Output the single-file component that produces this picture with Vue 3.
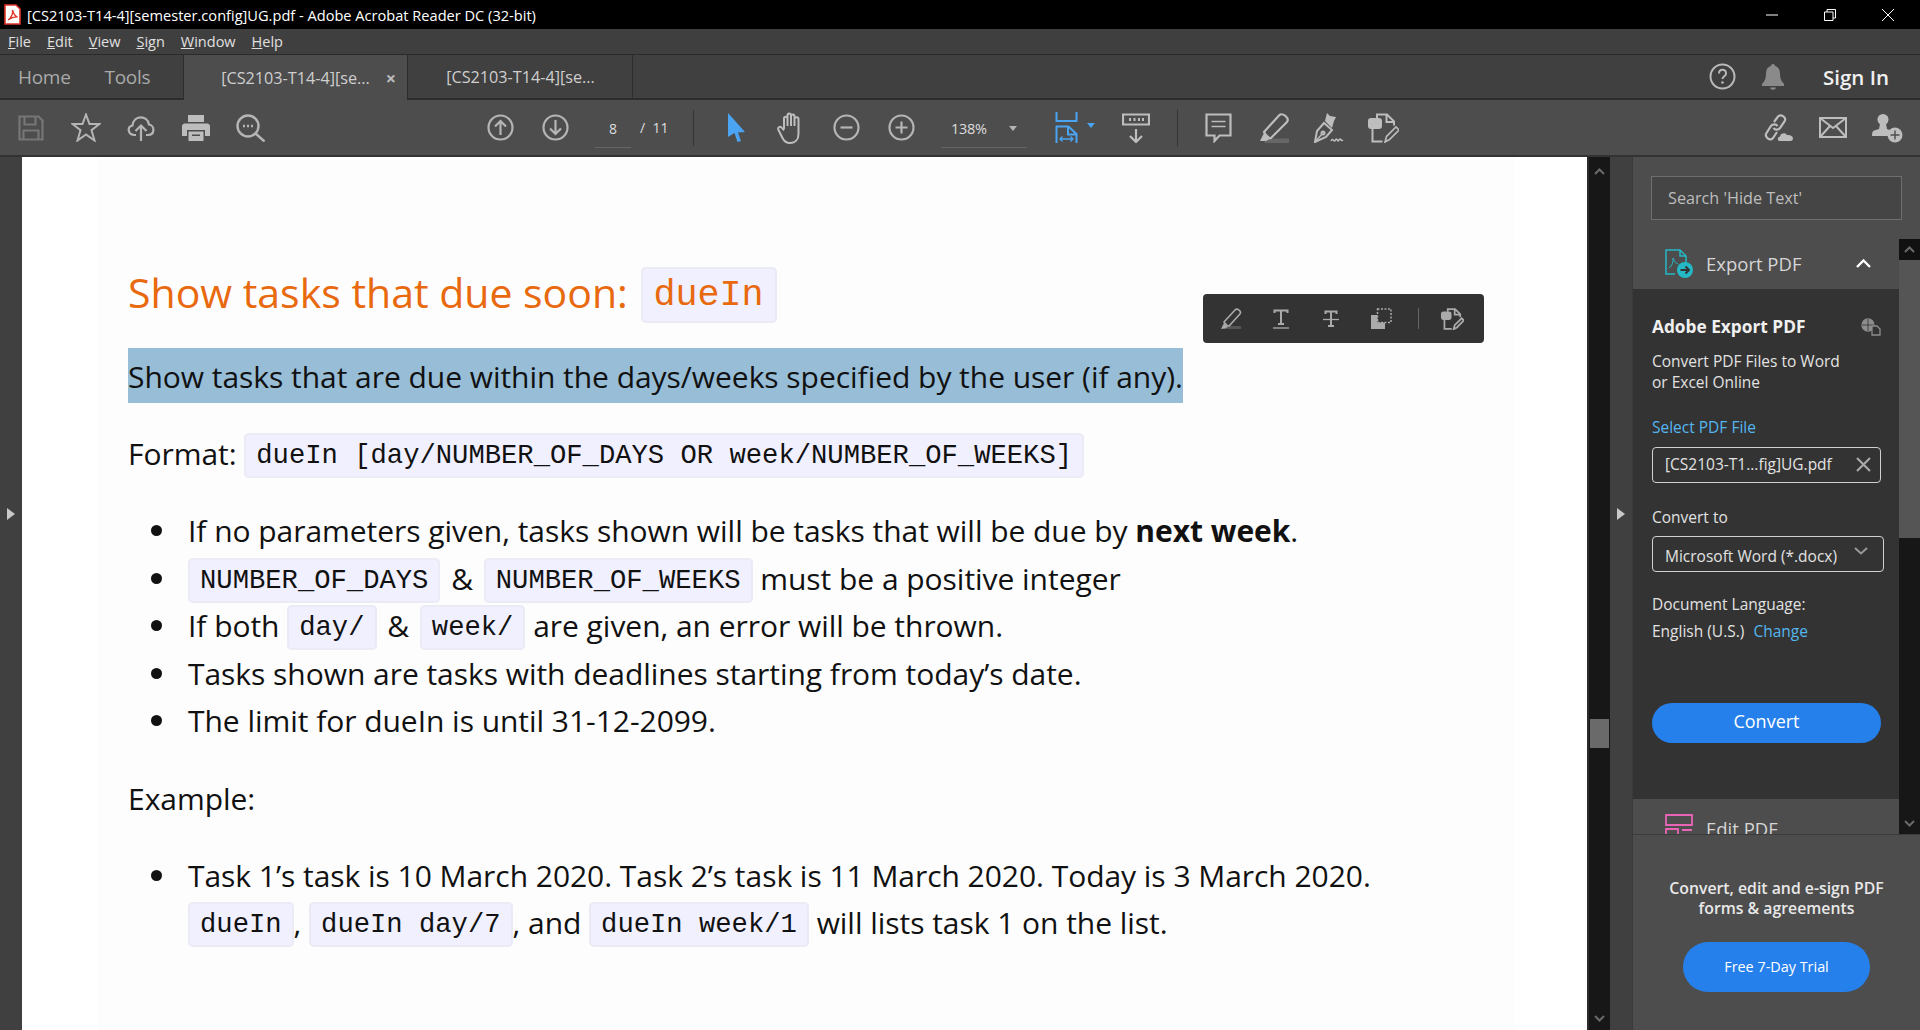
<script setup>
const menus = [
  { first: 'F', rest: 'ile' },
  { first: 'E', rest: 'dit' },
  { first: 'V', rest: 'iew' },
  { first: 'S', rest: 'ign' },
  { first: 'W', rest: 'indow' },
  { first: 'H', rest: 'elp' },
]
</script>

<template>
  <div class="app">
    <!-- title bar -->
    <div class="titlebar">
      <svg class="pdf-logo" width="17" height="21" viewBox="0 0 17 21">
        <path d="M1 1h11l4 4v15H1z" fill="#fff" stroke="#e0352b" stroke-width="1.6" />
        <path d="M4 16c3-2 5-6 4.500-10 1 4 2.500 6 5 7-3-.3-6 .7-9.500 3z" fill="none" stroke="#e0352b" stroke-width="1.300" />
      </svg>
      <span class="title-text">[CS2103-T14-4][semester.config]UG.pdf - Adobe Acrobat Reader DC (32-bit)</span>
      <div class="win-btns">
        <svg width="12" height="12" viewBox="0 0 12 12"><path d="M0 6h12" stroke="#fff" /></svg>
        <svg width="12" height="12" viewBox="0 0 12 12" fill="none" stroke="#fff"><path d="M.5 3h8.500v8.500H.5zM3 3V.5h8.500V9H9" /></svg>
        <svg width="12" height="12" viewBox="0 0 12 12" stroke="#fff"><path d="M0 0l12 12M12 0L0 12" /></svg>
      </div>
    </div>

    <!-- menu -->
    <div class="menubar">
      <span v-for="m in menus" :key="m.first" class="menu-item"><u>{{ m.first }}</u>{{ m.rest }}</span>
    </div>

    <!-- tabs -->
    <div class="tabbar">
      <span class="nav-link home">Home</span>
      <span class="nav-link tools">Tools</span>
      <div class="tab active">
        <span>[CS2103-T14-4][se...</span>
        <span class="tab-x">×</span>
      </div>
      <div class="tab second">
        <span>[CS2103-T14-4][se...</span>
      </div>
      <div class="tab-right">
        <svg width="27" height="27" viewBox="0 0 27 27" fill="none">
          <circle cx="13.500" cy="13.500" r="12" stroke="#b9b9b9" stroke-width="2" />
          <path d="M10 10.500c0-5 7-5 7 0 0 3-3.500 2.500-3.500 5.500" stroke="#b9b9b9" stroke-width="2" />
          <circle cx="13.500" cy="19.500" r="1.300" fill="#b9b9b9" />
        </svg>
        <svg class="bell" width="22" height="26" viewBox="0 0 22 26" fill="#8a8a8a">
          <path d="M11 0c1.300 0 2 .8 2 2 4 1 5 4.500 5 8 0 5 2 8 4 10v2H0v-2c2-2 4-5 4-10 0-3.500 1-7 5-8 0-1.200.7-2 2-2z" />
          <path d="M8 23.500h6c-.5 3-5.500 3-6 0z" />
        </svg>
        <span class="sign-in">Sign In</span>
      </div>
    </div>

    <!-- toolbar -->
    <div class="toolbar">
      <div class="tool first">
        <svg width="26" height="26" viewBox="0 0 26 26" fill="none" stroke="#767676" stroke-width="2.200">
          <path d="M1.500 1.500h19l4 4v19h-23z" />
          <path d="M6.500 1.500v8h11v-8M5.500 24.500v-9h15v9" />
        </svg>
      </div>
      <div class="tool">
        <svg width="30" height="29" viewBox="0 0 30 29" fill="none" stroke="#b5b5b5" stroke-width="2">
          <path d="M15 1.500l3.500 9.500h10l-8 6.200 3 10.300-8.500-6-8.500 6 3-10.300-8-6.200h10z" />
        </svg>
      </div>
      <div class="tool">
        <svg width="28" height="28" viewBox="0 0 28 28" fill="none" stroke="#b5b5b5" stroke-width="2.200">
          <path d="M9 21H7.500C1 21-.5 13 5.500 11.500 6.500 1 20 .5 22 10.500c6 1 6 10.500-1 10.500h-2" />
          <path d="M14 27V12M8.500 17l5.500-5.500 5.500 5.500" />
        </svg>
      </div>
      <div class="tool">
        <svg width="28" height="26" viewBox="0 0 28 26" fill="#bdbdbd">
          <path d="M6 0h16v7H6z" />
          <path d="M3 8.500h22c1.700 0 3 1.300 3 3V21h-5v-6H5v6H0v-9.500c0-1.700 1.300-3 3-3z" />
          <path d="M6.500 16.500h15V26h-15z" />
          <path d="M10 19.500h8v1.500h-8z" fill="#4d4d4d" />
        </svg>
      </div>
      <div class="tool">
        <svg width="30" height="28" viewBox="0 0 30 28" fill="none" stroke="#b5b5b5" stroke-width="2.400">
          <circle cx="12" cy="12" r="10.500" />
          <path d="M19.500 19.500l9 8" />
          <path d="M7 12h2M11 12h2M15 12h2" />
        </svg>
      </div>

      <div class="tool page-up">
        <svg width="27" height="27" viewBox="0 0 27 27" fill="none" stroke="#b5b5b5" stroke-width="2.200">
          <circle cx="13.500" cy="13.500" r="12" />
          <path d="M13.500 21V7M8 12.500l5.500-5.500 5.500 5.500" />
        </svg>
      </div>
      <div class="tool">
        <svg width="27" height="27" viewBox="0 0 27 27" fill="none" stroke="#b5b5b5" stroke-width="2.200">
          <circle cx="13.500" cy="13.500" r="12" />
          <path d="M13.500 6v14M8 14.500l5.500 5.500 5.500-5.500" />
        </svg>
      </div>
      <span class="page-input">8</span>
      <span class="page-total">/&nbsp;&nbsp;11</span>
      <span class="tool-sep sep-a"></span>

      <div class="tool cursor">
        <svg width="17" height="29" viewBox="0 0 17 29" fill="#4aa4f2"><path d="M0 0l17 19-7 .5 3 8.500-3.500 1-3-9L0 24z" /></svg>
      </div>
      <div class="tool">
        <svg width="28" height="32" viewBox="0 0 28 32" fill="none" stroke="#bdbdbd" stroke-width="2">
          <path d="M7 17V6.500c0-2.500 3.500-2.500 3.500 0V14M10.500 14V3.500c0-2.700 3.500-2.700 3.500 0V14M14 14V4.500c0-2.600 3.500-2.600 3.500 0V14M17.500 14V7c0-2.500 4-2.500 4 0v15c0 5-3 9-8.500 9-4 0-6-2-7.500-5L1.500 18c-1.500-2.500 2-4.500 3.500-2l2 2.500" />
        </svg>
      </div>
      <div class="tool">
        <svg width="27" height="27" viewBox="0 0 27 27" fill="none" stroke="#b5b5b5" stroke-width="2.200">
          <circle cx="13.500" cy="13.500" r="12" />
          <path d="M7.500 13.500h12" />
        </svg>
      </div>
      <div class="tool">
        <svg width="27" height="27" viewBox="0 0 27 27" fill="none" stroke="#b5b5b5" stroke-width="2.200">
          <circle cx="13.500" cy="13.500" r="12" />
          <path d="M7.500 13.500h12M13.500 7.500v12" />
        </svg>
      </div>
      <div class="zoom-select">
        <span>138%</span>
        <span class="caret"></span>
      </div>
      <div class="fit-icon">
        <svg width="23" height="31" viewBox="0 0 23 31" fill="none" stroke="#4aa4f2" stroke-width="2">
          <path d="M1.500 0v9h20V0" />
          <path d="M1.500 31V14.500h12l8 7.500v9M13 15v7.500h8" />
          <path d="M5 27h13M7.500 24.500L5 27l2.500 2.500M15.500 24.500L18 27l-2.500 2.500" stroke-width="1.300" />
        </svg>
        <span class="caret blue"></span>
      </div>
      <div class="tool read">
        <svg width="28" height="30" viewBox="0 0 28 30" fill="none" stroke="#bdbdbd" stroke-width="2.200">
          <path d="M1 1.500h26v10H1z" />
          <path d="M7 6.500h2M11.500 6.500h2M16 6.500h2M20 6.500h2" stroke-width="3" />
          <path d="M14 16v13M8 23l6 6 6-6" />
        </svg>
      </div>
      <span class="tool-sep sep-b"></span>
      <div class="tool comment">
        <svg width="27" height="30" viewBox="0 0 27 30" fill="none" stroke="#bdbdbd" stroke-width="2.200">
          <path d="M1.500 1.500h24v21H14.500l-5 5.500v-5.500h-8z" />
          <path d="M6.500 8.500h14M6.500 13.500h14" stroke-width="1.500" />
        </svg>
      </div>
      <div class="tool">
        <svg width="30" height="30" viewBox="0 0 30 30" fill="none">
          <path d="M8 25.500h22V30H5z" fill="#666" />
          <path d="M5 19L20 2.500c2-2 5-1 7 1s2.500 4 .5 6L12 25c-1.500 1-5.500-3-7-6z" stroke="#bdbdbd" stroke-width="2.200" />
          <path d="M1 28l4-8 6 6-4 2z" fill="#bdbdbd" />
        </svg>
      </div>
      <div class="tool">
        <svg width="30" height="31" viewBox="0 0 30 31" fill="none" stroke="#bdbdbd" stroke-width="2">
          <path d="M1 30l2-11 7-8 8 7-6 7z" />
          <path d="M1 30l7-8" stroke-width="1.500" />
          <circle cx="9" cy="21" r="1.500" />
          <path d="M11 9l2-8 3 3 6 1-2 4-2 7z" fill="#bdbdbd" stroke="none" />
          <path d="M17 29c2-4 2.500 2 4.500-1s1.500 3 3.500 0 1.500 2 4 0" stroke-width="1.600" />
        </svg>
      </div>
      <div class="tool">
        <svg width="31" height="30" viewBox="0 0 31 30" fill="none" stroke="#bdbdbd" stroke-width="2">
          <path d="M9 5V1.500h10l7 7v4M18.500 2V9h7" />
          <rect x="1" y="6" width="12" height="9" rx="2" fill="#bdbdbd" />
          <path d="M4.500 16v12.500h10" />
          <path d="M17 29l1.500-5.500 9.500-9.500 3 3-9.500 9.500z" stroke-width="1.600" />
        </svg>
      </div>

      <div class="toolbar-right">
        <div class="tool">
          <svg width="30" height="28" viewBox="0 0 30 28" fill="none">
            <path d="M11 8l4-5.500c3-3 9 1 6.500 5L17 14c-2 2.500-5 2-6.500 0M14 18l-4 6c-3 3.500-9-1-6.500-5L8 12c2-2.500 5-2 6.500 0" stroke="#bdbdbd" stroke-width="2.200" />
            <path d="M17 27c-3 0-3-4 0-4.500.5-3 5-4.500 7-1.500 3-.5 6 1 6 3.500 0 1.500-1 2.500-2.500 2.500z" fill="#bdbdbd" />
          </svg>
        </div>
        <div class="tool">
          <svg width="28" height="21" viewBox="0 0 28 21" fill="none" stroke="#bdbdbd" stroke-width="2">
            <path d="M1 1h26v19H1z" />
            <path d="M1 1l13 10L27 1M1 20l10-11M27 20L17 9" />
          </svg>
        </div>
        <div class="tool">
          <svg width="31" height="30" viewBox="0 0 31 30" fill="#bdbdbd">
            <circle cx="11" cy="6.500" r="5.500" />
            <path d="M8 11h6l1 5 4 1.500c-2 1-3 3-3 5.500H0c0-3 .5-5 2-5.500L7 16z" />
            <circle cx="23" cy="22" r="7.500" />
            <path d="M22.300 17.500h1.400v3.800h3.800v1.400h-3.800v3.800h-1.400v-3.800h-3.800v-1.400h3.800z" fill="#4d4d4d" />
          </svg>
        </div>
      </div>
    </div>

    <!-- workspace -->
    <div class="workspace">
      <div class="gutter left">
        <span class="tri"></span>
      </div>

      <div class="page">
        <div class="doc">
          <h2 class="doc-title">Show tasks that due soon: <code>dueIn</code></h2>
          <p class="selected">Show tasks that are due within the days/weeks specified by the user (if any).</p>
          <p class="doc-p">Format: <code>dueIn [day/NUMBER_OF_DAYS OR week/NUMBER_OF_WEEKS]</code></p>
          <ul class="doc-list">
            <li>If no parameters given, tasks shown will be tasks that will be due by <strong>next week</strong>.</li>
            <li><code>NUMBER_OF_DAYS</code> <span class="amp">&amp;</span> <code>NUMBER_OF_WEEKS</code> must be a positive integer</li>
            <li>If both <code>day/</code> <span class="amp">&amp;</span> <code>week/</code> are given, an error will be thrown.</li>
            <li>Tasks shown are tasks with deadlines starting from today’s date.</li>
            <li>The limit for dueIn is until 31-12-2099.</li>
          </ul>
          <p class="doc-p example">Example:</p>
          <ul class="doc-list second-list">
            <li>Task 1’s task is 10 March 2020. Task 2’s task is 11 March 2020. Today is 3 March 2020.<br />
              <code>dueIn</code>, <code>dueIn day/7</code>, and <code>dueIn week/1</code> will lists task 1 on the list.</li>
          </ul>
        </div>

        <!-- floating comment tools -->
        <div class="popup">
          <span class="pop-slot">
            <svg width="22" height="22" viewBox="0 0 22 22" fill="none">
              <path d="M6 18h15v3H4z" fill="#555" />
              <path d="M4 14L15 2c1.500-1.500 3.500-.5 4.500.5s1.500 2.500 0 4L9 18c-1 .5-4-2.500-5-4z" stroke="#aaa" stroke-width="1.600" />
              <path d="M1 21l3-6 4 4-3 1.500z" fill="#aaa" />
            </svg>
          </span>
          <span class="pop-slot">
            <svg width="16" height="20" viewBox="0 0 16 20" fill="none" stroke="#aaa" stroke-width="2">
              <path d="M1.500 4V1.500h13V4M8 1.500V15M5 15h6" />
              <path d="M0 19h16" stroke-width="1.300" />
            </svg>
          </span>
          <span class="pop-slot">
            <svg width="16" height="18" viewBox="0 0 16 18" fill="none" stroke="#aaa" stroke-width="2">
              <path d="M2.500 4V1.500h11V4M8 1.500V16M5 16h6" />
              <path d="M0 9.500h16" stroke-width="1.300" />
            </svg>
          </span>
          <span class="pop-slot">
            <svg width="21" height="21" viewBox="0 0 21 21">
              <path d="M0 7h14v14H0z" fill="#aaa" />
              <path d="M6.500 1h13.500v13.500H6.500z" fill="#333" stroke="#aaa" stroke-width="1.500" stroke-dasharray="2 1.500" />
            </svg>
          </span>
          <span class="popup-sep"></span>
          <span class="pop-slot last">
            <svg width="23" height="22" viewBox="0 0 31 30" fill="none" stroke="#aaa" stroke-width="2.400">
              <path d="M9 5V1.500h10l7 7v4M18.500 2V9h7" />
              <rect x="1" y="6" width="12" height="9" rx="2" fill="#aaa" />
              <path d="M4.500 16v12.500h10" />
              <path d="M17 29l1.500-5.500 9.500-9.500 3 3-9.500 9.500z" />
            </svg>
          </span>
        </div>
      </div>

      <div class="vscroll">
        <svg class="sc-top" width="11" height="7" viewBox="0 0 11 7" fill="none" stroke="#6a6a6a" stroke-width="2"><path d="M1 6l4.500-4.500L10 6" /></svg>
        <span class="sc-thumb"></span>
        <svg class="sc-bottom" width="11" height="7" viewBox="0 0 11 7" fill="none" stroke="#6a6a6a" stroke-width="2"><path d="M1 1l4.500 4.500L10 1" /></svg>
      </div>

      <div class="gutter mid">
        <span class="tri"></span>
      </div>

      <div class="panel">
        <div class="search-wrap">
          <div class="search-box">Search 'Hide Text'</div>
        </div>

        <div class="tool-list">
          <div class="tool-col">
            <div class="section-head">
              <svg width="28" height="29" viewBox="0 0 28 29" fill="none">
                <path d="M10 25H1V1h14l6 6v6M15 1v6h6" stroke="#25b8c5" stroke-width="1.500" />
                <path d="M4 19c3-2 4.500-6 4-10 1 3 2.500 5 5 6" stroke="#25b8c5" stroke-width="1" />
                <circle cx="20" cy="21" r="8" fill="#25b8c5" />
                <path d="M15.500 21h8M20.500 17.500L24 21l-3.500 3.500" stroke="#333" stroke-width="2" />
              </svg>
              <span>Export PDF</span>
              <svg class="chev" width="15" height="9" viewBox="0 0 15 9" fill="none" stroke="#fff" stroke-width="2.400"><path d="M1 8l6.500-6.500L14 8" /></svg>
            </div>

            <div class="section-body">
              <div class="body-head">
                <strong>Adobe Export PDF</strong>
                <svg width="20" height="18" viewBox="0 0 20 18" fill="none" stroke="#8d8d8d" stroke-width="1.300">
                  <circle cx="7" cy="7" r="6" fill="#8d8d8d" />
                  <path d="M1 7h12M7 1v12" stroke="#333" stroke-width=".8" />
                  <path d="M11 8h5l3 3v6h-8z" fill="#333" />
                </svg>
              </div>
              <p class="blurb">Convert PDF Files to Word<br />or Excel Online</p>
              <div class="link-label">Select PDF File</div>
              <div class="field">
                <span>[CS2103-T1...fig]UG.pdf</span>
                <svg width="15" height="15" viewBox="0 0 15 15" stroke="#a8a8a8" stroke-width="2.200"><path d="M1 1l13 13M14 1L1 14" /></svg>
              </div>
              <div class="field-label">Convert to</div>
              <div class="field wide">
                <span>Microsoft Word (*.docx)</span>
                <svg class="sel-chev" width="14" height="8" viewBox="0 0 14 8" fill="none" stroke="#999" stroke-width="2"><path d="M1 1l6 5.500L13 1" /></svg>
              </div>
              <div class="lang-label">Document Language:</div>
              <div class="lang-value">English (U.S.) <span class="change">Change</span></div>
              <div class="btn-convert">Convert</div>
            </div>

            <div class="section-head edit">
              <svg width="28" height="26" viewBox="0 0 28 26" fill="none" stroke="#e765b4" stroke-width="1.800">
                <path d="M1 1h26v10H1zM1 15h12v10H1zM17 16h10" />
              </svg>
              <span>Edit PDF</span>
            </div>
          </div>

          <div class="panel-scroll">
            <div class="ps-top">
              <svg width="11" height="7" viewBox="0 0 11 7" fill="none" stroke="#6a6a6a" stroke-width="2"><path d="M1 6l4.500-4.500L10 6" /></svg>
            </div>
            <span class="ps-thumb"></span>
            <svg class="ps-bottom" width="11" height="7" viewBox="0 0 11 7" fill="none" stroke="#6a6a6a" stroke-width="2"><path d="M1 1l4.500 4.500L10 1" /></svg>
          </div>
        </div>

        <div class="panel-foot">
          <p>Convert, edit and e-sign PDF<br />forms &amp; agreements</p>
          <div class="btn-trial">Free 7-Day Trial</div>
        </div>
      </div>
    </div>
  </div>
</template>

<style>
html, body {
  margin: 0;
  overflow: hidden;
  background: #404040;
}
</style>

<style scoped>
.app {
  height: 100vh;
  display: flex;
  flex-direction: column;
  font-family: "Open Sans", "Noto Sans", sans-serif;
  color: #e6e6e6;
  background: #404040;
}

/* top bars */
.titlebar {
  height: 29px;
  flex: none;
  background: #000;
  color: #fff;
  display: flex;
  align-items: center;
  padding-left: 4px;
  font-size: 14.600px;
}

.pdf-logo {
  margin-right: 6px;
}

.win-btns {
  margin-left: auto;
  display: flex;
  gap: 46px;
  padding-right: 26px;
}

.menubar {
  height: 25px;
  flex: none;
  background: #3f3f3f;
  border-bottom: 1px solid #2a2a2a;
  display: flex;
  align-items: center;
  gap: 16px;
  padding-left: 8px;
  font-size: 14.500px;
  color: #e0e0e0;
}

.tabbar {
  height: 43px;
  flex: none;
  background: #404040;
  border-bottom: 2px solid #2c2c2c;
  display: flex;
  align-items: center;
  font-size: 16.200px;
}

.nav-link {
  font-size: 19px;
  color: #a9a9a9;
  letter-spacing: -0.3px;
}

.home {
  margin-left: 18px;
}

.tools {
  margin-left: 34px;
}

.tab {
  height: 100%;
  display: flex;
  align-items: center;
  padding-left: 37px;
  color: #cfcfcf;
  box-sizing: border-box;
}

.tab.active {
  width: 225px;
  margin-left: 33px;
  margin-bottom: -2px;
  height: 45px;
  background: #4d4d4d;
  border-left: 1px solid #2c2c2c;
  border-right: 1px solid #2c2c2c;
}

.tab.second {
  width: 225px;
  padding-left: 38px;
  border-right: 1px solid #2c2c2c;
}

.tab-x {
  margin-left: 16px;
  font-size: 18px;
  font-weight: 700;
  color: #bbb;
}

.tab-right {
  margin-left: auto;
  display: flex;
  align-items: center;
  padding-right: 31px;
}

.bell {
  margin-left: 26px;
}

.sign-in {
  margin-left: 39.500px;
  font-size: 20.500px;
  font-weight: 600;
  color: #f0f0f0;
}

.toolbar {
  height: 55px;
  flex: none;
  background: #4d4d4d;
  border-bottom: 2px solid #333;
  display: flex;
  align-items: center;
  color: #ddd;
}

.tool {
  width: 55px;
  height: 100%;
  flex: none;
  display: flex;
  align-items: center;
  justify-content: center;
}

.tool.first {
  margin-left: 3.500px;
}

.page-up {
  margin-left: 194px;
}

.page-input {
  width: 36px;
  margin-left: 12.500px;
  height: 38px;
  line-height: 38px;
  text-align: center;
  font-size: 14px;
  border-bottom: 1px solid #666;
  box-sizing: border-box;
  margin-top: 2px;
}

.page-total {
  margin-left: 9px;
  width: 38px;
  font-size: 14px;
}

.tool-sep {
  width: 1px;
  height: 36px;
  background: #333;
  flex: none;
}

.sep-a {
  margin-left: 15px;
}

.cursor {
  margin-left: 14.500px;
}

.zoom-select {
  width: 86px;
  height: 38px;
  margin-left: 12.500px;
  margin-top: 2px;
  box-sizing: border-box;
  border-bottom: 1px solid #666;
  display: flex;
  align-items: center;
  padding-left: 10px;
  font-size: 14.500px;
  letter-spacing: -0.3px;
}

.caret {
  width: 0;
  height: 0;
  border-left: 4px solid transparent;
  border-right: 4px solid transparent;
  border-top: 5px solid #b5b5b5;
  margin-left: 22px;
}

.caret.blue {
  border-top-color: #4aa4f2;
  margin-left: 9px;
  margin-top: -5px;
}

.fit-icon {
  margin-left: 28px;
  display: flex;
  align-items: center;
  width: 42px;
  flex: none;
}

.read {
  margin-left: 17px;
  width: 44px;
}

.sep-b {
  margin-left: 19px;
}

.comment {
  margin-left: 13px;
}

.toolbar-right {
  margin-left: auto;
  display: flex;
  height: 100%;
  padding-right: 5px;
}

/* workspace */
.workspace {
  flex: 1;
  min-height: 0;
  display: flex;
}

.gutter {
  position: relative;
  flex: none;
  background: #404040;
  display: flex;
  align-items: center;
  justify-content: center;
}

.gutter.left {
  width: 22px;
}

.gutter.mid {
  width: 22px;
  border-right: 1px solid #3a3a3a;
}

.tri {
  width: 0;
  height: 0;
  border-top: 6px solid transparent;
  border-bottom: 6px solid transparent;
  border-left: 8px solid #c8c8c8;
  margin-top: -160px;
}

.page {
  position: relative;
  width: 1565px;
  flex: none;
  background: #fff;
  overflow: hidden;
  border-right: 2px solid #2b2b2b;
  color: #111;
}

.doc {
  margin-left: 76px;
  width: 1417px;
  height: 100%;
  box-sizing: border-box;
  padding: 106.500px 0 0 30px;
  background: #fdfdfd;
  font-size: 30px;
  letter-spacing: -0.04px;
}

.doc code {
  font-family: "Liberation Mono", monospace;
  font-size: 27.200px;
  line-height: 1;
  letter-spacing: 0;
  vertical-align: 2px;
  background: #f0f0ff;
  border: 2px solid #ebebf5;
  border-radius: 5px;
  padding: 5px 10px;
}

.amp {
  margin: 0 3px;
}

.doc-title {
  margin: 0;
  font-size: 41px;
  line-height: 56px;
  font-weight: 400;
  color: #e8690e;
  letter-spacing: 0;
}

.doc-title code {
  font-size: 36.700px;
  margin-left: 2px;
  vertical-align: 3px;
  padding: 5px 11px;
}

.selected {
  margin: 28.500px 0 0;
  width: 1055px;
  height: 55px;
  line-height: 58px;
  background: #97bdd7;
  white-space: nowrap;
}

.doc-p {
  margin: 28.500px 0 0;
  line-height: 44px;
}

.doc-list {
  margin: 31.500px 0 0;
  padding-left: 60px;
  list-style: none;
  line-height: 47.500px;
}

.doc-list li {
  position: relative;
}

.doc-list li::before {
  content: "";
  position: absolute;
  left: -37px;
  top: 18px;
  width: 11px;
  height: 11px;
  border-radius: 50%;
  background: #111;
}

.example {
  margin-top: 32.300px;
}

.second-list {
  margin-top: 31px;
}

.popup {
  position: absolute;
  left: 1181px;
  top: 137px;
  width: 281px;
  height: 49px;
  background: #333;
  border-radius: 4px;
  display: flex;
  align-items: center;
  padding-left: 3px;
  box-sizing: border-box;
}

.pop-slot {
  width: 50px;
  flex: none;
  display: flex;
  align-items: center;
  justify-content: center;
}

.pop-slot.last {
  margin-left: 8px;
}

.popup-sep {
  width: 1px;
  height: 21px;
  flex: none;
  background: #666;
  margin-left: 12px;
}

.vscroll {
  position: relative;
  width: 21px;
  flex: none;
  background: #171717;
}

.sc-top {
  position: absolute;
  left: 5px;
  top: 11px;
}

.sc-thumb {
  position: absolute;
  left: 1px;
  top: 562px;
  width: 19px;
  height: 29px;
  background: #6a6a6a;
}

.sc-bottom {
  position: absolute;
  left: 5px;
  bottom: 8px;
}

/* right panel */
.panel {
  flex: 1;
  min-width: 0;
  background: #4d4d4d;
  display: flex;
  flex-direction: column;
}

.search-wrap {
  height: 82px;
  flex: none;
  padding: 19px 18px 0;
  box-sizing: border-box;
}

.search-box {
  width: 251px;
  height: 44px;
  line-height: 42px;
  box-sizing: border-box;
  padding-left: 16px;
  border: 1px solid #6e6e6e;
  background: #454545;
  color: #bdbdbd;
  font-size: 16.200px;
}

.tool-list {
  flex: 1;
  min-height: 0;
  display: flex;
  border-bottom: 1px solid #3b3b3b;
}

.tool-col {
  width: 266px;
  flex: none;
  overflow: hidden;
}

.section-head {
  height: 50px;
  box-sizing: border-box;
  padding: 0 0 2px 32px;
  display: flex;
  align-items: center;
  font-size: 18.500px;
  color: #d6d6d6;
}

.section-head span {
  margin-left: 13px;
}

.chev {
  margin-left: 55px;
}

.section-head.edit {
  align-items: flex-start;
  padding-top: 15px;
  height: 60px;
}

.section-head.edit span {
  margin-top: 2px;
}

.section-body {
  height: 510px;
  box-sizing: border-box;
  background: #333;
  padding: 0 0 0 19px;
  font-size: 15.500px;
  color: #e2e2e2;
}

.body-head {
  padding-top: 27px;
  width: 229px;
  display: flex;
  justify-content: space-between;
  align-items: center;
  line-height: 22px;
}

.body-head strong {
  font-size: 17.300px;
  font-weight: 700;
  color: #f0f0f0;
}

.blurb {
  margin: 13px 0 0;
  line-height: 21px;
}

.link-label {
  margin-top: 24px;
  line-height: 20px;
  color: #55b6f0;
}

.field {
  width: 229px;
  height: 36px;
  margin-top: 10px;
  box-sizing: border-box;
  border: 1px solid #d0d0d0;
  border-radius: 4px;
  display: flex;
  align-items: center;
  justify-content: space-between;
  padding: 0 9px 2px 12px;
}

.field.wide {
  width: 232px;
  margin-top: 9px;
  padding: 3px 15px 0 12px;
}

.sel-chev {
  margin-top: -9px;
}

.field-label {
  margin-top: 24px;
  line-height: 20px;
}

.lang-label {
  margin-top: 22px;
  line-height: 20px;
}

.lang-value {
  margin-top: 7px;
  line-height: 20px;
}

.change {
  margin-left: 5px;
  color: #55b6f0;
}

.btn-convert {
  width: 229px;
  height: 40px;
  margin-top: 62px;
  line-height: 37px;
  text-align: center;
  border-radius: 20px;
  background: #2680eb;
  color: #fff;
  font-size: 18px;
}

.panel-scroll {
  position: relative;
  flex: 1;
  background: #171717;
}

.ps-top {
  height: 21px;
  background: #111;
  display: flex;
  align-items: center;
  justify-content: center;
}

.ps-thumb {
  display: block;
  height: 278px;
  background: #555;
}

.ps-bottom {
  position: absolute;
  left: 5px;
  bottom: 7px;
}

.panel-foot {
  height: 195px;
  flex: none;
  box-sizing: border-box;
  padding-top: 43px;
  text-align: center;
  font-size: 15.800px;
  font-weight: 600;
  color: #e8e8e8;
}

.panel-foot p {
  margin: 0;
  line-height: 20px;
}

.btn-trial {
  width: 187px;
  height: 50px;
  margin: 24px auto 0;
  line-height: 50px;
  border-radius: 25px;
  background: #2680eb;
  color: #fff;
  font-size: 14.400px;
  font-weight: 400;
}
</style>
